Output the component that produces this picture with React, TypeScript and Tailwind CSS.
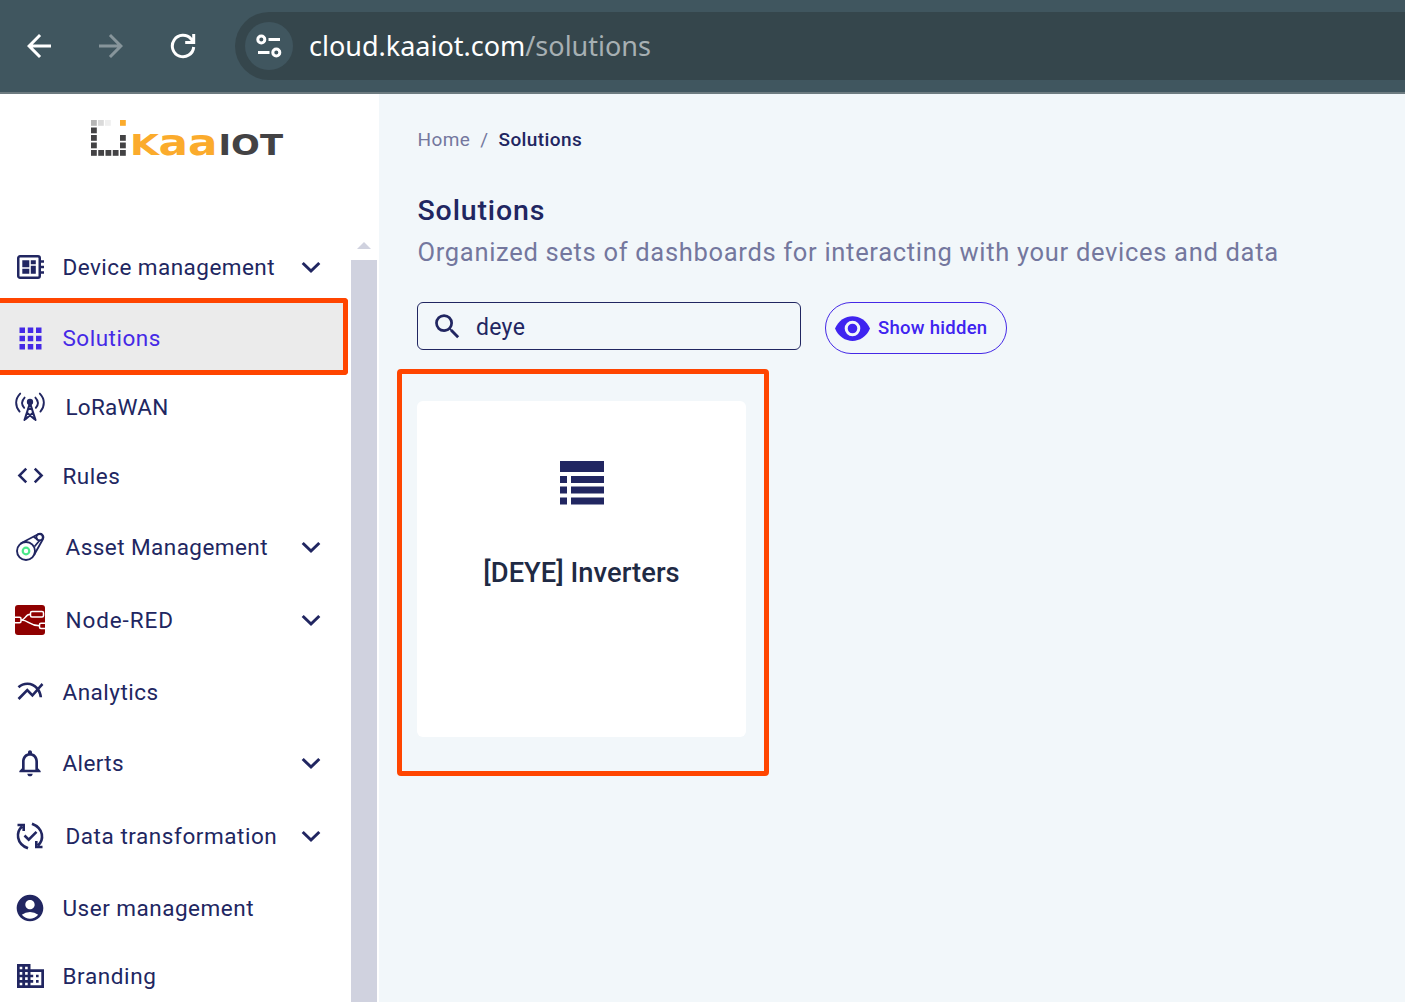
import type { ReactNode } from 'react';
import {
  MdApps,
  MdCode,
  MdMultilineChart,
  MdNotificationsNone,
  MdAccountCircle,
  MdSearch,
  MdArrowBack,
  MdArrowForward,
} from 'react-icons/md';

function LoraIcon() {
  return (
    <svg width="30" height="30" viewBox="0 0 30 30" fill="none" stroke="currentColor" strokeWidth="1.9" strokeLinecap="round">
      <path d="M5.2 1.6C-.1 7-.1 14 4.600 19.600M24.800 1.600c5.300 5.400 5.300 12.400.6 18M9.600 5.600c-3 3.200-3 7.200-.4 10.200M20.400 5.600c3 3.200 3 7.200.4 10.200" />
      <circle cx="15" cy="10" r="2.200" fill="currentColor" />
      <path strokeWidth="2.100" d="M15 11 9.500 28M15 11l5.500 17M13 17h4M12.300 21l7 6M17.700 21l-7 6" />
    </svg>
  );
}

function AssetIcon() {
  return (
    <svg width="30" height="30" viewBox="0 0 30 30" fill="none" stroke="currentColor" strokeWidth="1.9">
      <circle cx="11" cy="19" r="9" />
      <circle cx="24.600" cy="5.200" r="3.200" strokeWidth="1.800" />
      <path d="M5.500 11.500 23 2.200c3.600-1.500 6.500 1.500 5 4.800L19.200 22.800M19 5l3.500 2.500M25 8l-5.500 6.500" strokeWidth="1.800" />
      <circle cx="11" cy="19" r="3.300" stroke="#4be88a" strokeWidth="2.200" />
    </svg>
  );
}

function NodeRedIcon() {
  return (
    <svg width="30" height="30" viewBox="0 0 30 30" fill="none" stroke="#fff" strokeWidth="1.500">
      <rect width="30" height="30" rx="3" fill="#8f0000" stroke="none" />
      <path d="M0 12.300h4.500q1.500 0 1.500 1.500v2.400q0 1.500-1.500 1.500H0M30 18.300h-4q-1.500 0-1.500 1.500V22q0 1.500 1.500 1.500h4" />
      <rect x="15.500" y="6.500" width="13" height="5.500" rx="1.500" />
      <path d="M6 15c5 0 3.500-5.700 9.500-5.700M6 15c8 0 8 5.800 18.500 5.800" />
    </svg>
  );
}

function TransformIcon() {
  return (
    <svg width="30" height="30" viewBox="0 0 30 30" fill="none" stroke="currentColor" strokeWidth="2.600">
      <path d="M7 5.500C1 11 .8 22.500 13 27.300M23 24.500c6-5.500 6.200-17-6-21.800M2.500 4h6.200v6M27.500 26h-6.200v-6M9.500 14.500l4.200 4.200 7.800-7.800" />
    </svg>
  );
}

function BuildingIcon() {
  return (
    <svg width="27" height="24" viewBox="0 0 27 24" fill="currentColor">
      <path fillRule="evenodd" d="M0 0h13.500v5.300H27V24H0zM2.700 2.700v2.600h2.600V2.700zm5.400 0v2.600h2.600V2.700zM2.700 8v2.700h2.600V8zm5.400 0v2.700h2.600V8zm-5.400 5.300V16h2.600v-2.700zm5.400 0V16h2.600v-2.700zm-5.400 5.400v2.600h2.600v-2.600zm5.400 0v2.600h2.600v-2.600zM13.500 8v2.700h2.700v2.600h-2.700V16h2.700v2.700h-2.700v2.600h10.800V8zM19 10.700h2.600v2.600H19zm0 5.300h2.600v2.700H19z" />
    </svg>
  );
}

function BoardIcon() {
  return (
    <svg width="27" height="24" viewBox="0 0 27 24" fill="none" stroke="currentColor" strokeWidth="2.500">
      <rect x="1.250" y="1.250" width="21.500" height="21.500" rx="1.800" />
      <path d="M23 6.500h4M23 12h4M23 17.500h4" />
      <path fill="currentColor" stroke="none" d="M5.300 5.300h7v7h-7zM13.800 5.300h5v4h-5zM5.300 13.800h7v5h-7zM13.800 10.800h5v8h-5z" />
    </svg>
  );
}

function Chevron() {
  return (
    <svg width="20" height="14" viewBox="0 0 20 14" fill="none" stroke="currentColor" strokeWidth="3">
      <path d="m1.700 3 8.300 8 8.300-8" />
    </svg>
  );
}

function Logo() {
  const squares: [number, number, string][] = [
    [0, 0, '#b5b5b5'], [7, 0, '#dadada'], [14, 0, '#efefef'], [29, 0, '#fbab2c'],
    [0, 7.500, '#434244'], [0, 15, '#434244'], [0, 22.500, '#434244'], [0, 30, '#434244'],
    [7.250, 30, '#434244'], [14.500, 30, '#434244'], [21.750, 30, '#434244'], [29, 30, '#434244'],
    [29, 22.500, '#434244'], [29, 15, '#434244'],
  ];
  return (
    <svg width="210" height="66" viewBox="0 -16 210 66" fontFamily="DejaVu Sans" fontWeight="700">
      {squares.map(([x, y, fill]) => (
        <rect key={`${x}-${y}`} x={x} y={y} width="5.800" height="5.800" fill={fill} />
      ))}
      <g fill="#fbab2c">
        <text x="39" y="35" fontSize="28.500" textLength="29" lengthAdjust="spacingAndGlyphs">K</text>
        <text x="67.500" y="34.600" fontSize="36" textLength="59" lengthAdjust="spacingAndGlyphs">aa</text>
      </g>
      <text x="127.500" y="35" fontSize="28.500" fill="#434244" textLength="64.500" lengthAdjust="spacingAndGlyphs">IOT</text>
    </svg>
  );
}

type Item = { label: string; icon: ReactNode; row: string; text: string; expandable?: boolean };

const items: Item[] = [
  { label: 'Device management', icon: <BoardIcon />, row: 'h-16 pt-0.5', text: 'pl-4 tracking-[0.450px]', expandable: true },
  { label: 'Solutions', icon: <MdApps size={33} />, row: 'h-[77px] rounded-r border-y-[5px] border-r-[5px] border-[#ff4500] bg-[#ebebeb] pt-[3px] text-[#4529e6]', text: 'pl-4 tracking-[0.500px]' },
  { label: 'LoRaWAN', icon: <LoraIcon />, row: 'h-[63px]', text: 'pl-[19px] tracking-[0.250px]' },
  { label: 'Rules', icon: <MdCode size={31} />, row: 'h-[75px] mb-px', text: 'pl-4 tracking-[0.500px]' },
  { label: 'Asset Management', icon: <AssetIcon />, row: 'h-[66px]', text: 'pl-[19px] tracking-[0.450px]', expandable: true },
  { label: 'Node-RED', icon: <NodeRedIcon />, row: 'h-20 mb-px', text: 'pl-[19px] tracking-[0.900px]', expandable: true },
  { label: 'Analytics', icon: <MdMultilineChart size={31} />, row: 'h-[61px]', text: 'pl-4 tracking-[0.500px]' },
  { label: 'Alerts', icon: <MdNotificationsNone size={32} />, row: 'h-[82px]', text: 'pl-4 tracking-[0.400px]', expandable: true },
  { label: 'Data transformation', icon: <TransformIcon />, row: 'h-16', text: 'pl-[19px] tracking-[0.550px]', expandable: true },
  { label: 'User management', icon: <MdAccountCircle size={32} />, row: 'h-[79px] mb-px', text: 'pl-4 tracking-[0.500px]' },
  { label: 'Branding', icon: <BuildingIcon />, row: 'h-14', text: 'pl-4 tracking-[0.600px]' },
];

function BrowserBar() {
  return (
    <header className="flex h-[94px] shrink-0 items-center border-b-2 border-[#6d7b80] bg-[#40565f] text-white">
      <div className="flex h-full w-[235px] shrink-0 items-center pl-[21px]">
        <MdArrowBack size={36} />
        <MdArrowForward size={36} className="ml-9 text-[#87959b]" />
        <svg className="ml-[41px]" width="26" height="26" viewBox="0 0 26 26" fill="none" stroke="currentColor" strokeWidth="3">
          <path d="M23.700 14a10.700 10.700 0 1 1-2.600-8l2.600 3M23.700 1v8.500h-8.500" />
        </svg>
      </div>
      <div className="flex h-[68px] flex-1 items-center rounded-l-full bg-[#35464c] pl-2.5">
        <div className="flex size-12 items-center justify-center rounded-full bg-[#40565f]">
          <svg width="26" height="24" viewBox="0 0 26 24" fill="none" stroke="currentColor" strokeWidth="3">
            <circle cx="5.300" cy="5.500" r="3.500" />
            <circle cx="20.300" cy="18.500" r="3.500" />
            <path d="M12.500 5.500H24M2 18.500h11.500" />
          </svg>
        </div>
        <div className="ml-4 pb-0.5 font-['Noto_Sans'] text-[27px] leading-none whitespace-nowrap">
          cloud.kaaiot.com<span className="text-[#a7b0b3]">/solutions</span>
        </div>
      </div>
    </header>
  );
}

function Sidebar() {
  return (
    <aside className="flex w-[379px] shrink-0 flex-col bg-white">
      <div className="h-[140px] shrink-0 pt-2.5 pl-[91px]">
        <Logo />
      </div>
      <div className="flex min-h-0 flex-1">
        <nav className="w-[348px] shrink-0">
          {items.map((item) => (
            <div key={item.label} className={`flex items-center ${item.row}`}>
              <span className="ml-[13.500px] flex w-[33px] shrink-0 justify-center">{item.icon}</span>
              <span className={`flex-1 pt-px text-[22.500px] leading-none whitespace-nowrap ${item.text}`}>{item.label}</span>
              {item.expandable && <span className="mr-[27px]"><Chevron /></span>}
            </div>
          ))}
        </nav>
        <div className="ml-[3px] flex w-[26px] flex-col items-center">
          <svg className="mt-2 mb-[11px] shrink-0" width="14" height="7" viewBox="0 0 14 7">
            <path d="m7 0 7 7H0z" fill="#d0d2df" />
          </svg>
          <div className="w-full flex-1 bg-[#d0d2df]" />
        </div>
      </div>
    </aside>
  );
}

export default function App() {
  return (
    <div className="flex h-[1002px] w-[1405px] flex-col overflow-hidden font-['Roboto',sans-serif] text-[#212661]">
      <BrowserBar />
      <div className="flex min-h-0 flex-1">
        <Sidebar />
        <main className="flex-1 bg-[#f2f7fa] pt-9 pl-[38px]">
          <nav className="flex gap-2.5 pl-[0.500px] text-[19px] leading-5 tracking-[0.400px] text-[#74779e]">
            <span>Home</span>
            <span>/</span>
            <span className="font-medium text-[#212661]">Solutions</span>
          </nav>
          <h1 className="mt-[45px] pl-[0.500px] text-[28.500px] leading-8 font-medium tracking-[0.850px]">Solutions</h1>
          <p className="mt-[9px] pl-[0.500px] text-[25.500px] leading-8 tracking-[0.690px] whitespace-nowrap text-[#74779e]">
            Organized sets of dashboards for interacting with your devices and data
          </p>
          <div className="mt-[34px] flex items-start gap-6">
            <div className="flex h-12 w-[384px] items-center rounded-md border border-[#212661] pl-[13px]">
              <MdSearch size={33} />
              <span className="ml-3 pt-0.5 text-[23px] leading-none tracking-[0.300px]">deye</span>
            </div>
            <button className="flex h-[52px] w-[182px] items-center rounded-full border border-[#4529e6] pl-[9px] text-[#3f24f0]">
              <svg width="35" height="25" viewBox="0 0 35 25">
                <path fill="currentColor" d="M0 12.500C7-4 28-4 35 12.500 28 29 7 29 0 12.500z" />
                <circle cx="17.500" cy="12.500" r="6.300" fill="currentColor" stroke="#f2f7fa" strokeWidth="3" />
              </svg>
              <span className="ml-2 text-[18.500px] leading-none font-medium tracking-[0.280px] whitespace-nowrap">Show hidden</span>
            </button>
          </div>
          <section className="mt-[15px] -ml-5 h-[407px] w-[372px] rounded border-[5px] border-[#ff4500] pt-[27px] pl-[15px]">
            <article className="flex h-[336px] w-[329px] flex-col items-center rounded-md bg-white pt-[60px]">
              <svg width="44" height="44" viewBox="0 0 44 44" fill="currentColor">
                <path d="M0 0h44v11H0zM0 15h7v7H0zM11 15h33v7H11zM0 25.500h7v7H0zM11 25.500h33v7H11zM0 36.500h7v7H0zM11 36.500h33v7H11z" />
              </svg>
              <h2 className="mt-[52px] text-[27.300px] leading-8 font-medium tracking-[0.050px] text-[#1f2a44]">[DEYE] Inverters</h2>
            </article>
          </section>
        </main>
      </div>
    </div>
  );
}
